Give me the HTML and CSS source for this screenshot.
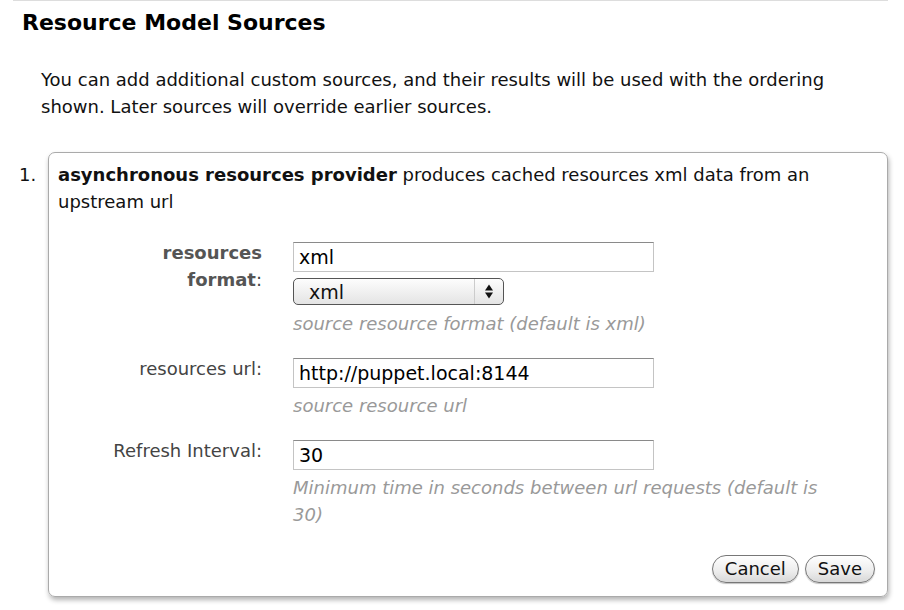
FILE: index.html
```html
<!DOCTYPE html>
<html>
<head>
<meta charset="utf-8">
<link rel="stylesheet" href="styles.css">
</head>
<body>
<div class="page">
  <h2 class="title">Resource Model Sources</h2>
  <p class="intro">You can add additional custom sources, and their results will be used with the ordering shown. Later sources will override earlier sources.</p>
  <div class="item">
    <div class="num">1.</div>
    <div class="card">
      <div class="desc"><b>asynchronous resources provider</b><span> produces cached resources xml data from an upstream url</span></div>
      <div class="form">
        <div class="label"><b>resources format</b><span>:</span></div>
        <div class="field">
          <div class="input">xml</div>
          <div class="select"><span class="sel-text">xml</span><span class="sel-arrows"><svg width="10" height="17" viewBox="0 0 10 17"><path d="M5 1.5 L9 7.5 L1 7.5 Z" fill="#111"/><path d="M5 15.5 L9 9.5 L1 9.5 Z" fill="#111"/></svg></span></div>
          <div class="help">source resource format (default is xml)</div>
        </div>
        <div class="label">resources url:</div>
        <div class="field">
          <div class="input">http://puppet.local:8144</div>
          <div class="help">source resource url</div>
        </div>
        <div class="label">Refresh Interval:</div>
        <div class="field">
          <div class="input">30</div>
          <div class="help">Minimum time in seconds between url requests (default is 30)</div>
        </div>
      </div>
      <div class="buttons">
        <span class="btn">Cancel</span>
        <span class="btn">Save</span>
      </div>
    </div>
  </div>
</div>
</body>
</html>
```

FILE: styles.css
```css
html, body {
  margin: 0;
  padding: 0;
  background: #fff;
}
body {
  font-family: "DejaVu Sans", Verdana, sans-serif;
  color: #111;
  font-size: 18px;
}
.page {
  margin: 0 16px 0 13px;
  border-top: 1px solid #ddd;
  width: 875px;
}
.title {
  margin: 0;
  padding: 9px 0 0 9px;
  font-size: 22px;
  line-height: 26px;
  font-weight: bold;
  color: #000;
}
.intro {
  margin: 0;
  padding: 30px 0 0 28px;
  line-height: 27px;
  color: #111;
}
.item {
  display: flex;
  margin-top: 32px;
}
.num {
  width: 35px;
  padding-left: 6px;
  padding-top: 9px;
  line-height: 27px;
  box-sizing: border-box;
}
.card {
  flex: 1;
  border: 1px solid #aaa;
  border-radius: 7px;
  box-shadow: 1px 3px 5px rgba(0,0,0,0.3);
  padding: 8px 9px 13px 9px;
  margin-bottom: 13px;
}
.desc {
  line-height: 27px;
}
.form {
  display: grid;
  grid-template-columns: 170px 530px;
  column-gap: 31px;
  row-gap: 21px;
  margin-top: 27px;
  padding-left: 34px;
}
.label {
  text-align: right;
  color: #444;
  line-height: 27px;
  margin-top: -3px;
}
.label b {
  color: #555;
}
.field {
  display: flex;
  flex-direction: column;
  align-items: flex-start;
}
.input {
  width: 361px;
  height: 30px;
  box-sizing: border-box;
  border: 1px solid #c4c4c4;
  border-top-color: #8a8a8a;
  padding: 2px 5px;
  font-size: 19px;
  line-height: 25px;
  color: #000;
}
.select {
  margin-top: 6px;
  margin-bottom: 1px;
  width: 211px;
  height: 27px;
  box-sizing: border-box;
  border: 1px solid #555;
  border-radius: 5px;
  background: linear-gradient(#fdfdfd, #e4e4e4);
  display: flex;
  align-items: center;
}
.sel-text {
  flex: 1;
  padding-left: 15px;
  font-size: 19px;
  line-height: 22px;
}
.sel-arrows {
  width: 28px;
  height: 100%;
  border-left: 1px solid #ccc;
  display: flex;
  align-items: center;
  justify-content: center;
}
.help {
  font-style: italic;
  color: #999;
  line-height: 27px;
  margin-top: 4px;
}
.buttons {
  display: flex;
  justify-content: flex-end;
  gap: 6px;
  margin-top: 27px;
  padding-right: 3px;
}
.btn {
  font-size: 18px;
  color: #111;
  height: 28px;
  line-height: 26px;
  box-sizing: border-box;
  border: 1px solid #777;
  border-radius: 14px;
  padding: 0 12px;
  background: linear-gradient(#ffffff, #ececec 60%, #d8d8d8);
  box-shadow: 0 1px 1px rgba(0,0,0,0.25);
}
```
